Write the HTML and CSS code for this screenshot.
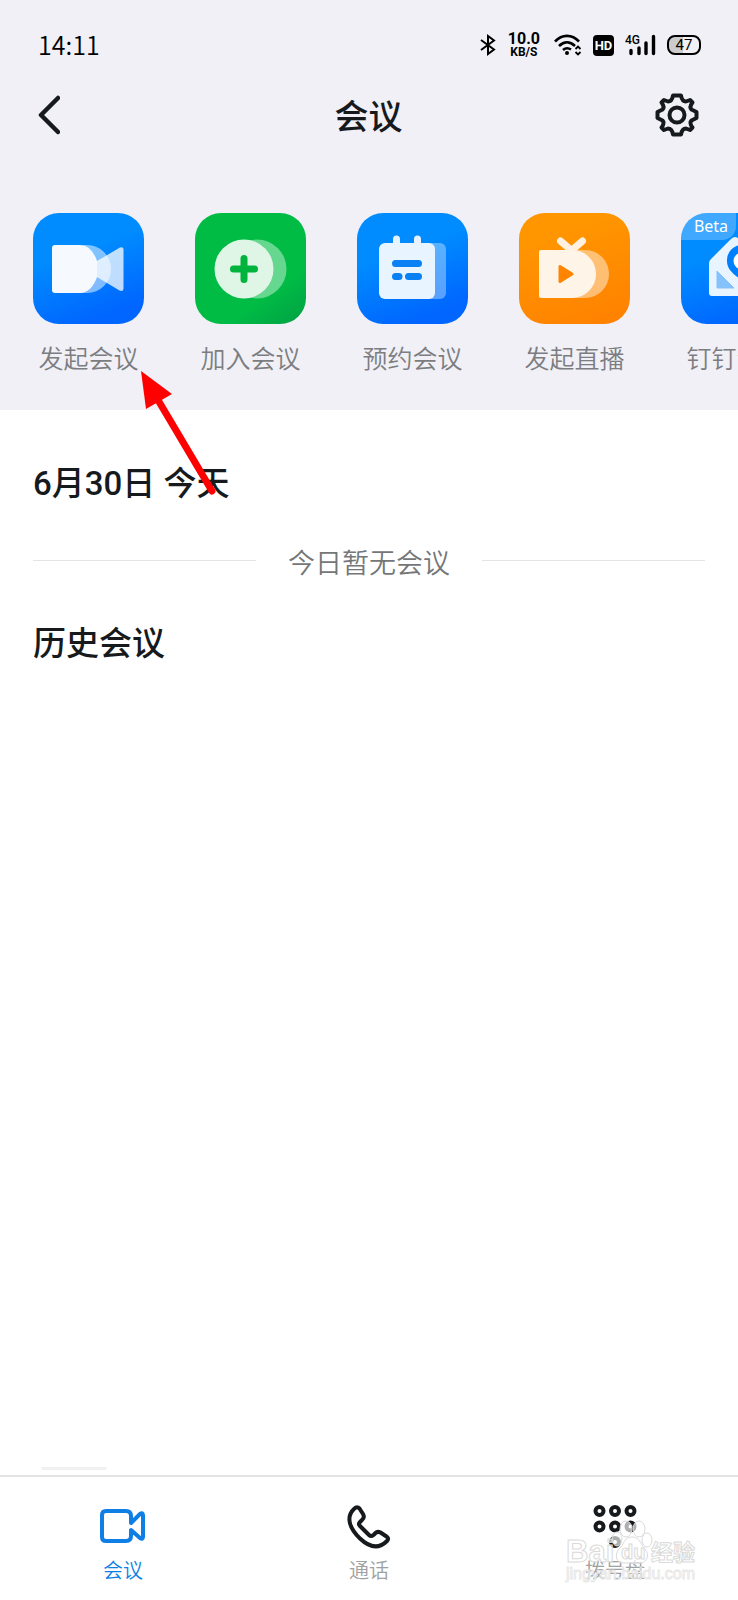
FILE: index.html
```html
<!DOCTYPE html>
<html lang="zh-CN">
<head>
  <meta charset="UTF-8" />
  <meta name="viewport" content="width=device-width, initial-scale=1.0"/>
  <title>会议</title>
  <link rel="stylesheet" href="styles.css">
</head>
<body>

<header>
  <div class="status-bar">
    <span class="time">14:11</span>
    <div class="status-icons">
      <svg width="17" height="22" viewBox="0 0 17 22" fill="none" stroke="#000" stroke-width="2">
        <path d="M1 6l13 9.500L8 20V2l6 4.500L1 16"/>
      </svg>
      <div class="speed"><b>10.0</b><small>KB/S</small></div>
      <svg width="28" height="22" viewBox="0 0 28 22" fill="none" stroke="#000" stroke-width="2.600">
        <path d="M1 7.500C8 0 18 0 25 7.500M5 12c5-5 11-5 16 0M9 16c3-2.500 5-2.500 8-.5"/>
        <circle cx="13" cy="19" r="2" fill="#000" stroke="none"/>
        <path d="M21.500 15l2.500-2.500 2.500 2.500M21.500 18l2.500 2.500 2.500-2.500" stroke-width="1.800"/>
      </svg>
      <span class="hd">HD</span>
      <div class="signal">
        <span>4G</span>
        <svg width="31" height="22" viewBox="0 0 31 22" stroke="#000" stroke-width="3.400" stroke-linecap="round">
          <path d="M6 16.500v3M14 14v5.500M21 9v10.500M28.500 2.500v17"/>
        </svg>
      </div>
      <div class="battery"><span>47</span></div>
    </div>
  </div>

  <div class="title-bar">
    <button class="icon-btn" aria-label="返回">
      <svg width="24" height="42" viewBox="0 0 24 42" fill="none" stroke="#171a1d" stroke-width="4.500" stroke-linecap="round" stroke-linejoin="round">
        <path d="M22 4L5 21l17 17"/>
      </svg>
    </button>
    <h1>会议</h1>
    <button class="icon-btn" aria-label="设置">
      <svg width="44" height="44" viewBox="-22 -22 44 44" fill="none" stroke="#171a1d" stroke-width="4" stroke-linejoin="round">
        <path d="M-4-19.500H4Q5-13.500 9-13.500L13-15L15.500-12.500Q12-8 14.500-5.500L19.500-3V3L14.500 5.500Q12 8 15.500 12.500L13 15L9 13.500Q5 13.500 4 19.500H-4Q-5 13.500-9 13.500L-13 15L-15.500 12.500Q-12 8-14.500 5.500L-19.500 3V-3L-14.500-5.500Q-12-8-15.500-12.500L-13-15L-9-13.500Q-5-13.500-4-19.500Z"/>
        <circle r="7.500"/>
      </svg>
    </button>
  </div>

  <nav class="actions">
    <button class="action">
      <svg class="tile blue" viewBox="0 0 111 111">
        <path d="M50 32h4a24 24 0 0 1 0 48h-9z" fill="#fff" opacity=".5"/>
        <path d="M64 48L87 34.500q3.500-1 3.500 2V75q0 4-4 2.500L64 64z" fill="#fff" opacity=".75"/>
        <path d="M22 32h25C55 32 61 39 64 48v16C61 73 55 80 47 80H22q-3 0-3-3V35q0-3 3-3z" fill="#f6faff"/>
      </svg>
      <span>发起会议</span>
    </button>
    <button class="action">
      <svg class="tile green" viewBox="0 0 111 111">
        <circle cx="62" cy="56" r="29.500" fill="#fff" opacity=".4"/>
        <circle cx="49" cy="56" r="29.500" fill="#dff6e6"/>
        <path d="M38.500 56h21M49 45.500v21" stroke="#00b33c" stroke-width="7" stroke-linecap="round"/>
      </svg>
      <span>加入会议</span>
    </button>
    <button class="action">
      <svg class="tile blue" viewBox="0 0 111 111">
        <rect x="50" y="30" width="39" height="56" rx="6" fill="#fff" opacity=".35"/>
        <path d="M39.500 26v12M60.500 26v12" stroke="#e6f3ff" stroke-width="7" stroke-linecap="round"/>
        <rect x="22" y="30" width="56" height="56" rx="6" fill="#e8f4ff"/>
        <path d="M38.500 50.500h23M38.500 63.500h3.500M51.500 63.500h10" stroke="#0a80f5" stroke-width="7" stroke-linecap="round"/>
      </svg>
      <span>预约会议</span>
    </button>
    <button class="action">
      <svg class="tile orange" viewBox="0 0 111 111">
        <path d="M55 37h11a24 24 0 0 1 0 48H50z" fill="#fff" opacity=".45"/>
        <path d="M41.500 28l11 9.500 11-9.500" fill="none" stroke="#fff0df" stroke-width="7" stroke-linecap="round" stroke-linejoin="round"/>
        <path d="M22 37h31a24 24 0 0 1 0 48H22q-2 0-2-2V39q0-2 2-2z" fill="#fff4e8"/>
        <path d="M41 53.500v15l12-7.500z" fill="#ff8500" stroke="#ff8500" stroke-width="3" stroke-linejoin="round"/>
      </svg>
      <span>发起直播</span>
    </button>
    <button class="action">
      <svg class="tile blue" viewBox="0 0 111 111">
        <path d="M28 50q0-2 2-4l20-20q4-4 8 0l24 22v32q0 3-3 3H31q-3 0-3-3z" fill="#e8f4ff"/>
        <path d="M61 32a15 15 0 0 0-15 16c0 9 7 13 15 20 7-7 14-11 14-20a15 15 0 0 0-14-16z" fill="#0080ff"/>
        <circle cx="61" cy="48" r="8.500" fill="#fff"/>
        <path d="M36 58v17h17z" fill="#85c1fb" stroke="#85c1fb" stroke-linejoin="round"/>
      </svg>
      <em class="beta">Beta</em>
      <span>钉钉会议</span>
    </button>
  </nav>
</header>

<main>
  <h2>6月30日 今天</h2>
  <p class="empty">今日暂无会议</p>
  <h2>历史会议</h2>
  <div class="card-edge"></div>
</main>

<footer class="tabs">
  <a class="tab active" href="#meeting">
    <svg width="48" height="48" viewBox="0 0 48 48" fill="none" stroke="currentColor" stroke-width="4" stroke-linejoin="round">
      <path d="M7 9h20q5 0 5 5v7l9-9q3-2 3 1.500v21q0 3.500-3 1.500L32 28v6q0 5-5 5H7q-4 0-4-4V13q0-4 4-4z"/>
    </svg>
    <span>会议</span>
  </a>
  <a class="tab" href="#call">
    <svg width="48" height="48" viewBox="0 0 48 48" fill="none" stroke="#171a1d" stroke-width="4" stroke-linejoin="round">
      <path d="M9.500 6.500Q12 4 14.500 6.500L18 12q2 3.500-1 6l-2 2q-2 2 0 4l9 9q2 2 4.500 0l2-2q2-2 5-.5l6 4q3 2 .5 4.500C34 47 25 46 15 36.500S0 15 9.500 6.500z"/>
    </svg>
    <span>通话</span>
  </a>
  <a class="tab" href="#dial">
    <svg width="48" height="48" viewBox="0 0 48 48" fill="none" stroke="#171a1d" stroke-width="4">
      <circle cx="8.500" cy="9" r="4"/><circle cx="24" cy="9" r="4"/><circle cx="39.500" cy="9" r="4"/>
      <circle cx="8.500" cy="24.500" r="4"/><circle cx="24" cy="24.500" r="4"/><circle cx="39.500" cy="24.500" r="4"/>
      <circle cx="24" cy="40" r="4"/>
    </svg>
    <span>拨号盘</span>
  </a>
  <svg class="watermark" width="140" height="72" viewBox="0 0 140 72">
    <g fill="#fff" fill-opacity=".65" stroke="#dadada">
      <text class="wm-logo" x="3" y="44">Bai</text>
      <ellipse cx="54" cy="21" rx="5" ry="7"/>
      <ellipse cx="63" cy="11" rx="6" ry="8"/>
      <ellipse cx="76" cy="11" rx="6" ry="8"/>
      <ellipse cx="84" cy="22" rx="5" ry="7"/>
      <path d="M69 19c8 0 9 8 13 12 5 6 2 14-5 14H61c-8 0-10-8-5-14 5-4 5-12 13-12z"/>
      <text class="wm-du" x="58" y="41">du</text>
      <text class="wm-cn" x="88" y="42">经验</text>
    </g>
    <text class="wm-url" x="3" y="61">jingyan.baidu.com</text>
  </svg>
</footer>

<svg class="arrow" width="76" height="126" viewBox="0 0 76 126">
  <path d="M18 30l54 91" stroke="#f00" stroke-width="7" stroke-linecap="round"/>
  <path d="M1 1l31 23L6 39z" fill="#f00"/>
</svg>

</body>
</html>
```
FILE: styles.css
```css
* {
  box-sizing: border-box;
}

body {
  margin: 0;
  min-height: 100vh;
  display: flex;
  flex-direction: column;
  position: relative;
  overflow-x: hidden;
  font-family: Roboto, "Noto Sans CJK SC", sans-serif;
  background: #fff;
  color: #171a1d;
}

button {
  border: none;
  background: none;
  padding: 0;
  font: inherit;
  color: inherit;
  cursor: pointer;
}

svg {
  display: block;
  flex-shrink: 0;
}

header {
  background: #f0f0f6;
  padding-bottom: 32px;
}

.status-bar {
  display: flex;
  justify-content: space-between;
  align-items: center;
  height: 90px;
  padding: 0 37px 0 38px;
  color: #000;
}

.time {
  font-family: "Noto Sans CJK SC", sans-serif;
  font-size: 25px;
  font-weight: 350;
  line-height: 40px;
  padding-bottom: 3px;
}

.status-icons {
  display: flex;
  align-items: center;
  gap: 11px;
}

.speed {
  display: flex;
  flex-direction: column;
  align-items: center;
  margin-right: 3px;
}

.speed b {
  font-size: 16px;
  line-height: 14px;
}

.speed small {
  font-size: 12px;
  font-weight: 700;
  line-height: 12px;
}

.hd {
  width: 21px;
  background: #000;
  color: #fff;
  border-radius: 4px;
  font-size: 13px;
  font-weight: 700;
  line-height: 21px;
  text-align: center;
}

.signal {
  position: relative;
}

.signal span {
  position: absolute;
  top: 0;
  left: 0;
  font-size: 12px;
  font-weight: 500;
  line-height: 12px;
}

.battery {
  width: 34px;
  border: 2px solid #000;
  border-radius: 8px;
  background: linear-gradient(90deg, #ccc 47%, transparent 47%);
  font-size: 15px;
  line-height: 16px;
  text-align: center;
}

.title-bar {
  display: flex;
  justify-content: space-between;
  align-items: center;
  height: 50px;
  padding: 0 39px 0 36px;
}

.icon-btn {
  display: flex;
  width: 44px;
}

h1 {
  margin: 0;
  padding: 5px 0 0 2px;
  font-size: 34px;
  font-weight: 500;
  line-height: 45px;
}

.actions {
  display: flex;
  gap: 51px;
  padding: 73px 0 0 33px;
  overflow: hidden;
}

.action {
  position: relative;
  flex: 0 0 111px;
  color: #7c7d81;
  font-size: 25px;
  font-weight: 350;
  line-height: 36px;
  white-space: nowrap;
}

.action span {
  display: block;
  margin-top: 18px;
}

.tile {
  width: 111px;
  height: 111px;
  border-radius: 26px;
}

.blue {
  background: linear-gradient(160deg, #008cff 35%, #0066ff 85%);
}

.green {
  background: linear-gradient(145deg, #00bc45 70%, #00a044);
}

.orange {
  background: linear-gradient(160deg, #ff9600 20%, #ff8000);
}

.beta {
  position: absolute;
  top: 0;
  left: 0;
  width: 55px;
  border-radius: 26px 0 14px 0;
  background: rgba(255, 255, 255, 0.25);
  color: #fff;
  font-family: "Noto Sans", sans-serif;
  font-size: 16px;
  font-style: normal;
  font-weight: 400;
  line-height: 27px;
  padding-left: 5px;
}

main {
  flex: 1;
  display: flex;
  flex-direction: column;
  padding: 50px 33px 5px;
}

h2 {
  margin: 0;
  font-size: 33px;
  font-weight: 500;
  line-height: 48px;
}

.empty {
  display: flex;
  gap: 32px;
  margin: 36px 0;
  color: #757677;
  font-size: 27px;
  font-weight: 350;
  line-height: 40px;
}

.empty::before,
.empty::after {
  content: "";
  flex: 1;
  height: 1px;
  margin-top: 16px;
  background: #e3e4e5;
}

.card-edge {
  width: 66px;
  height: 3px;
  margin: auto 0 0 8px;
  border-radius: 0 0 8px 8px;
  background: #f1f1f1;
}

.tabs {
  display: flex;
  position: relative;
  border-top: 2px solid #e2e3e4;
  height: 125px;
  padding-top: 25px;
}

.tab {
  flex: 1;
  display: flex;
  flex-direction: column;
  align-items: center;
  gap: 6px;
  color: #a0a1a3;
  font-size: 20px;
  font-weight: 350;
  line-height: 30px;
  text-decoration: none;
}

.tab.active {
  color: #0f7fe5;
}

.watermark {
  position: absolute;
  right: 35px;
  bottom: 10px;
  font-family: "Liberation Sans", "Noto Sans CJK SC", sans-serif;
}

.wm-logo {
  font-size: 31px;
  font-weight: 700;
}

.wm-du {
  font-size: 20px;
  font-weight: 700;
}

.wm-cn {
  font-size: 22px;
  font-weight: 700;
}

.wm-url {
  font-size: 16px;
  fill: #fff;
  fill-opacity: 0.6;
  stroke: #e2e2e2;
  stroke-opacity: 0.8;
}

.arrow {
  position: absolute;
  top: 370px;
  left: 140px;
}
```
